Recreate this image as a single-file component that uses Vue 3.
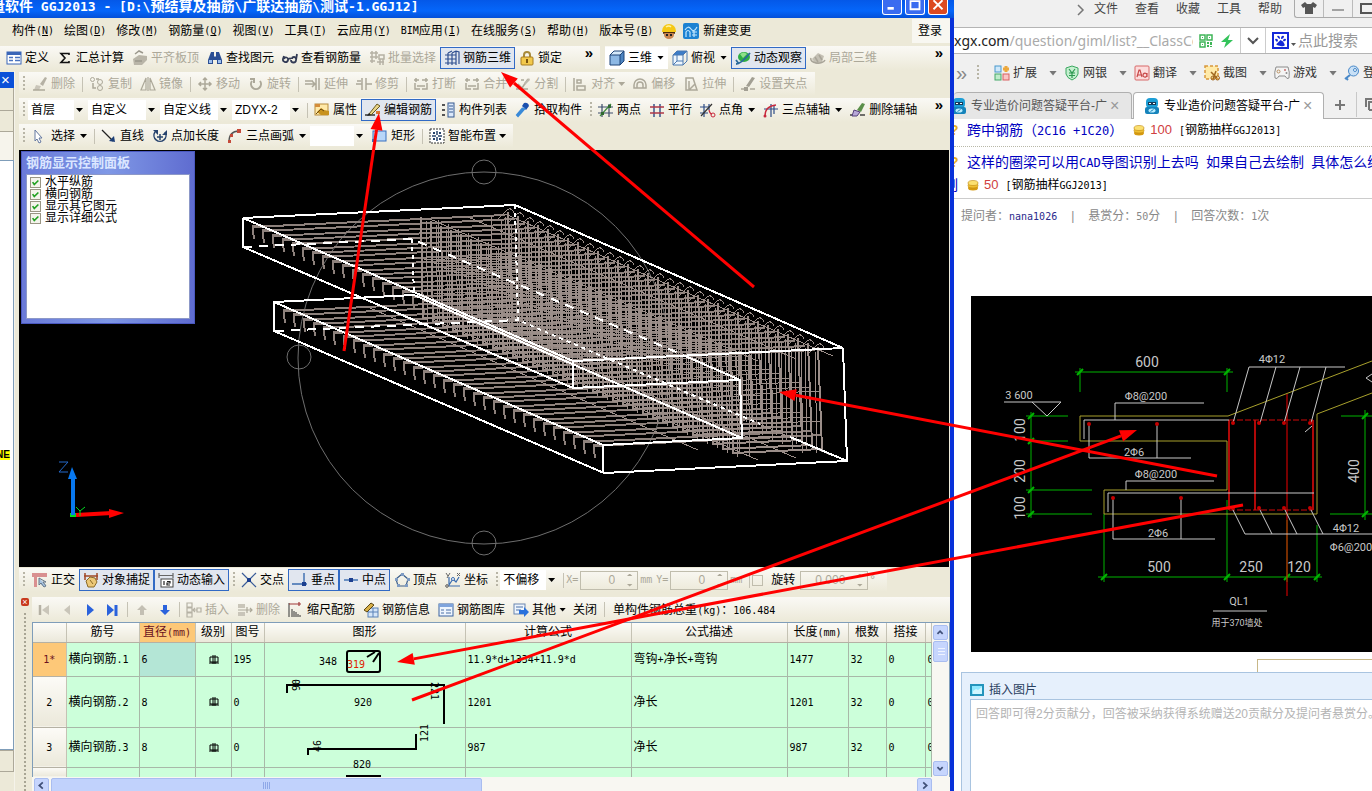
<template>
  <div class="screen">
    <section class="app">
      <header class="titlebar">
        <span class="title"><Txt s="量软件 GGJ2013 - [D:\预结算及抽筋\广联达抽筋\测试-1.GGJ12]" /></span>
        <span class="win-btns">
          <button class="wb" aria-label="最小化"><svg viewBox="0 0 20 15"><path d="M5 9h7" stroke="#fff" stroke-width="3" /></svg></button>
          <button class="wb" aria-label="最大化"><svg viewBox="0 0 20 15"><path d="M5 0v10h10V0M5 1h10" stroke="#fff" stroke-width="2" fill="none" /></svg></button>
          <button class="wb close" aria-label="关闭"><svg viewBox="0 0 20 15"><path d="M5 0l10 10M15 0L5 10" stroke="#fff" stroke-width="2" /></svg></button>
        </span>
      </header>

      <nav class="menubar">
        <button v-for="m in menus" :key="m[1]" class="menu"><Txt :s="m[0]" /><span class="lat">(<u>{{ m[1] }}</u>)</span></button>
        <svg class="ic helmet" viewBox="0 0 16 16" v-html="icons.helmet" />
        <button class="menu change"><svg class="ic" viewBox="0 0 16 16" v-html="icons.wave" />新建变更</button>
        <button class="login">登录</button>
      </nav>

      <div class="bar-row first">
        <div class="strip grow">
          <button v-for="b in bar1" :key="b.t" class="tb" :class="{ on: b.on }" :disabled="b.off">
            <svg class="ic" viewBox="0 0 16 16" v-html="icons[b.i]" />{{ b.t }}
          </button>
          <span class="more">»</span>
        </div>
        <div class="strip view">
          <button v-for="b in bar1b" :key="b.t" class="tb" :class="{ on: b.on, white: b.white }" :disabled="b.off">
            <svg class="ic" viewBox="0 0 16 16" v-html="icons[b.i]" />{{ b.t }}<i v-if="b.arrow" class="arr wide" />
          </button>
          <span class="more">»</span>
        </div>
      </div>

      <div class="body">
        <aside class="side">
          <div class="side-head">×</div>
          <div class="side-a"></div>
          <div class="side-b"></div>
          <div class="side-c"></div>
          <div class="side-tree"><mark>NE</mark></div>
          <div class="side-b"></div>
          <div class="side-d"></div>
        </aside>

        <main class="work">
          <div class="bar-row">
            <div class="strip">
              <i class="grip" />
              <template v-for="b in bar2" :key="b.t">
                <i v-if="b.sep" class="sep" />
                <button class="tb" disabled>
                  <svg class="ic" viewBox="0 0 16 16" v-html="icons[b.i]" />{{ b.t }}<i v-if="b.arrow" class="arr" />
                </button>
              </template>
            </div>
          </div>

          <div class="bar-row">
            <div class="strip grow">
              <i class="grip" />
              <label v-for="c in combos" :key="c" class="combo" :class="{ short: c === '首层' }">
                <select :aria-label="c"><option>{{ c }}</option></select><i class="arr" />
              </label>
              <i class="sep" />
              <button v-for="b in bar3" :key="b.t" class="tb" :class="{ on: b.on }">
                <svg class="ic" viewBox="0 0 16 16" v-html="icons[b.i]" />{{ b.t }}
              </button>
              <i class="grip late" />
              <button v-for="b in bar3b" :key="b.t" class="tb">
                <svg class="ic" viewBox="0 0 16 16" v-html="icons[b.i]" />{{ b.t }}<i v-if="b.arrow" class="arr wide" />
              </button>
              <span class="more">»</span>
            </div>
          </div>

          <div class="bar-row">
            <div class="strip">
              <i class="grip" />
              <template v-for="b in bar4" :key="b.t">
                <i v-if="b.sep" class="sep" />
                <label v-if="b.combo" class="combo blank"><select aria-label="画弧方式"><option></option></select><i class="arr" /></label>
                <button v-else class="tb">
                  <svg class="ic" viewBox="0 0 16 16" v-html="icons[b.i]" />{{ b.t }}<i v-if="b.arrow" class="arr" :class="{ wide: b.arrow > 1 }" />
                </button>
              </template>
            </div>
          </div>

          <div class="viewport">
            <svg class="scene" shape-rendering="crispEdges">
              <g transform="translate(-19 -150)" fill="none">
                <g stroke="#6e6e6e" shape-rendering="auto">
                  <circle cx="484" cy="358" r="186" />
                  <circle cx="484" cy="172" r="12" />
                  <circle cx="299" cy="357" r="12" />
                  <circle cx="484" cy="543" r="12" />
                </g>
                <path :d="bars" stroke="#8d817c" stroke-width="2" />
                <path :d="stirrups" stroke="#9b8e89" stroke-width="2" />
                <path :d="ties" stroke="#9b8e89" />
                <g stroke="#fff" stroke-width="2">
                  <path d="M243 218L515 205L843 348L573 361ZM243 218V247L573 388V361M573 388L740 380L742 438L603 445L274 302V331L604 473L847 461L843 348M603 445V473M274 302L414 295L742 438M740 380L683 355" />
                  <path stroke-dasharray="9 7" d="M243 247L412 239L683 355M275 331L518 320" />
                  <path stroke-dasharray="4 4" d="M412 239L414 295M515 205L518 320L760 424" />
                  <path d="M790 437L847 461" />
                </g>
                <g shape-rendering="auto">
                  <path d="M70 513h6v4h-6z" fill="#0d2" />
                  <path d="M73 515V474" stroke="#0878f0" stroke-width="4" />
                  <path d="M72 467l5 12h-9z" fill="#0878f0" />
                  <path d="M76 515L112 513" stroke="#f00" stroke-width="4" />
                  <path d="M124 513l-15 5v-9z" fill="#f00" />
                  <path d="M76 507l4 4l5-4M80 511v5" stroke="#0d2" />
                  <path d="M59 462h9l-9 10h9" stroke="#2468c8" />
                </g>
              </g>
            </svg>
            <div class="panel">
              <div class="panel-title">钢筋显示控制面板</div>
              <div class="panel-body">
                <label v-for="c in checks" :key="c"><input type="checkbox" checked /><i class="tick"><svg viewBox="0 0 11 11"><path d="M2 5l2 3l5-5" fill="none" stroke="#21a121" stroke-width="2" /></svg></i>{{ c }}</label>
              </div>
            </div>
          </div>

          <div class="bar-row snap">
            <div class="strip">
              <i class="grip" />
              <template v-for="b in snaps" :key="b.t">
                <i v-if="b.grip" class="grip late" />
                <button class="tb" :class="{ on: b.on }">
                  <svg class="ic" viewBox="0 0 16 16" v-html="icons[b.i]" />{{ b.t }}
                </button>
              </template>
              <i class="grip late" />
              <label class="combo short"><select aria-label="偏移"><option>不偏移</option></select><i class="arr" /></label>
              <i class="sep" />
              <label class="num"><span class="lat">X=</span><span class="spin"><input value="0" disabled /><i /></span><span class="lat">mm</span></label>
              <label class="num"><span class="lat">Y=</span><span class="spin"><input value="0" disabled /><i /></span><span class="lat">mm</span></label>
              <i class="sep" />
              <label class="rot"><input type="checkbox" />旋转</label>
              <span class="spin big"><input aria-label="旋转角度" value="0.000" disabled /><i /></span><span class="deg">°</span>
            </div>
          </div>

          <div class="dock">
            <div class="dock-edge"><button aria-label="关闭">×</button></div>
            <div class="dock-main">
              <div class="rowbar">
                <button v-for="n in navs" :key="n" class="nav" :aria-label="n"><svg class="ic" viewBox="0 0 16 16" v-html="icons[n]" /></button>
                <i class="sep" />
                <button v-for="n in moves" :key="n" class="nav" :aria-label="n"><svg class="ic" viewBox="0 0 16 16" v-html="icons[n]" /></button>
                <i class="sep" />
                <button v-for="b in edits" :key="b.t" class="tb" :disabled="b.off">
                  <svg class="ic" viewBox="0 0 16 16" v-html="icons[b.i]" />{{ b.t }}<i v-if="b.arrow" class="arr" />
                </button>
                <button class="tb">关闭</button>
                <i class="sep" />
                <span class="total"><Txt s="单构件钢筋总重(kg)：106.484" /></span>
              </div>
              <div class="gridbox">
                <div class="grid-clip">
                  <table>
                    <colgroup><col v-for="(w, i) in cols" :key="i" :style="{ width: w }" /></colgroup>
                    <thead>
                      <tr><th v-for="(h, i) in heads" :key="i" :class="{ hot: i === 2 }"><Txt :s="h" /></th></tr>
                    </thead>
                    <tbody>
                      <tr v-for="(r, i) in rows" :key="i" :class="'r' + i">
                        <th :class="{ hot: i === 0 }"><Txt :s="r.n" /></th>
                        <td><Txt :s="r.name" /></td>
                        <td class="dia" :class="{ sel: i === 0 }"><Txt :s="r.d" /></td>
                        <td class="mid"><svg v-if="r.d" class="grade" viewBox="0 0 10 10"><path d="M1 2h8v5H1zM4 0v9M6 0v9M0 8h10" fill="none" stroke="#000" /></svg></td>
                        <td><Txt :s="r.no" /></td>
                        <td class="shape"><svg v-html="r.svg" /></td>
                        <td><Txt :s="r.f" /></td>
                        <td><Txt :s="r.desc" /></td>
                        <td><Txt :s="r.len" /></td>
                        <td><Txt :s="r.cnt" /></td>
                        <td><Txt :s="r.lap" /></td>
                        <td><Txt :s="r.lap" /></td>
                      </tr>
                    </tbody>
                  </table>
                </div>
                <div class="vscroll">
                  <button aria-label="上">
                    <svg viewBox="0 0 15 15"><path d="M4 9l3-3l3 3" /></svg>
                  </button>
                  <div class="vthumb"></div>
                  <button class="down" aria-label="下">
                    <svg viewBox="0 0 15 15"><path d="M4 6l3 3l3-3" /></svg>
                  </button>
                </div>
              </div>
              <div class="hscroll">
                <button aria-label="左"><svg viewBox="0 0 15 15"><path d="M9 4L5 7.500l4 3.500" /></svg></button>
                <div class="hthumb"><i /></div>
                <button class="right" aria-label="右"><svg viewBox="0 0 15 15"><path d="M6 4l4 3.500l-4 3.500" /></svg></button>
              </div>
            </div>
          </div>
        </main>
      </div>
    </section>

    <section class="web">
      <nav class="web-menu">
        <svg class="chev" viewBox="0 0 8 12"><path d="M1 1l5 5l-5 5" fill="none" stroke="#777" stroke-width="1.500" /></svg>
        <button v-for="m in webMenus" :key="m">{{ m }}</button>
        <span class="web-win">
          <svg viewBox="0 0 28 17"><path d="M10 2l-4 3l2 3l2-1v7h8V7l2 1l2-3l-4-3l-2 2h-4z" fill="#555" /></svg>
          <svg viewBox="0 0 28 17"><path d="M8 10h12" stroke="#555" /></svg>
          <svg viewBox="0 0 28 17"><path d="M8 4h12v9H8z" fill="none" stroke="#555" stroke-width="2" /></svg>
        </span>
      </nav>
      <div class="address">
        <span class="url"><b>xgx.com</b>/question/giml/list?__ClassCode</span>
        <svg class="ic" viewBox="0 0 16 16" v-html="icons.qr" />
        <svg class="ic bolt" viewBox="0 0 16 16" v-html="icons.bolt" />
        <span class="drop"><svg viewBox="0 0 14 10"><path d="M2 2l5 5l5-5" fill="none" stroke="#555" stroke-width="2" /></svg></span>
        <svg class="paw" viewBox="0 0 17 17" v-html="icons.paw" /><i class="arr" />
        <input class="search" placeholder="点此搜索" aria-label="搜索" />
      </div>
      <div class="plugins">
        <span class="raquo">»</span><i class="grip" />
        <button v-for="p in plugins" :key="p[0]"><svg class="ic" viewBox="0 0 16 16" v-html="icons[p[1]]" />{{ p[0] }}<i class="arr" /></button>
      </div>
      <div class="tabs">
        <div class="tab old"><svg class="ic" viewBox="0 0 16 16" v-html="icons.bot" /><span>专业造价问题答疑平台-广</span><em>×</em></div>
        <div class="tab cur"><svg class="ic" viewBox="0 0 16 16" v-html="icons.bot" /><span>专业造价问题答疑平台-广</span><em>×</em></div>
        <button class="plus" aria-label="新标签"><svg viewBox="0 0 12 12"><path d="M6 1v10M1 6h10" stroke="#777" stroke-width="2" /></svg></button>
        <button class="tablist" aria-label="标签列表"><svg viewBox="0 0 18 14"><path d="M2 9V1h13M5 12V4h12v5M5 12h6" fill="none" stroke="#777" stroke-width="2" /><path d="M11 10l3 3l3-3" fill="none" stroke="#777" /></svg></button>
      </div>
      <div class="page">
        <div class="q one">
          <i class="qm">?</i><a href="#">跨中钢筋（<Txt s="2C16 +1C20" />）</a>
          <svg class="coin" viewBox="0 0 12 12" v-html="icons.coin" /><b>100</b><span><Txt s="[钢筋抽样GGJ2013]" /></span>
        </div>
        <div class="q two">
          <i class="qm">?</i><a href="#"><Txt s="这样的圈梁可以用CAD导图识别上去吗 如果自己去绘制 具体怎么绘" /></a>
        </div>
        <div class="q three">
          <a class="frag" href="#">制</a><svg class="coin" viewBox="0 0 12 12" v-html="icons.coin" /><b>50</b><span><Txt s="[钢筋抽样GGJ2013]" /></span>
        </div>
        <div class="meta">
          <span>提问者：<a href="#"><Txt s="nana1026" /></a></span><i>|</i><span><Txt s="悬赏分：50分" /></span><i>|</i><span><Txt s="回答次数：1次" /></span>
        </div>
        <div class="cad">
          <svg>
            <g transform="translate(-971 -296)" fill="none" font-family="Roboto, 'Noto Sans CJK SC', sans-serif">
              <g stroke="#00b400">
                <path d="M1075 372H1233M1080 368v24M1227 368v24M1031 412V518M1026 416h42M1031 441h37M1026 490h66M1026 514h66M1104 514v68M1227 500v82M1287 520v62M1317 525v57M1098 577h224M1365 410v110M1341 416h31M1330 514h42" />
                <path stroke-width="2" d="M1077 375l6-6M1224 375l6-6M1028 419l6-6M1028 444l6-6M1028 493l6-6M1028 517l6-6M1101 580l6-6M1224 580l6-6M1284 580l6-6M1314 580l6-6M1362 419l6-6M1362 517l6-6" />
              </g>
              <path stroke="#a8a02c" d="M1080 416H1228L1372 361M1080 416V441H1227V490H1104V514H1317V414L1372 393" />
              <path stroke="#b00808" stroke-width="2" d="M1229 420V510M1313 420V510M1255 420v90" />
              <path stroke="#d00808" d="M1229 420H1313M1229 510H1313" stroke-dasharray="6 2" />
              <path stroke="#e00" d="M1287 394V596" />
              <path stroke="#c8c8c8" d="M1084 439V420H1229M1115 420V403H1204M1089 424V458H1191M1157 424V458M1108 512V493H1314M1126 490V481H1214M1113 497V539H1215M1181 497V539M1004 402H1061L1047 416L1032 402M1233 423L1249 367H1345M1260 423L1276 367M1284 423L1300 367M1311 423L1326 367M1305 432l7-6M1232 508L1245 534H1372M1259 508L1272 534M1284 508L1297 534M1310 508L1323 534M1213 611h54M1372 374l-6 4l6 4" />
              <g fill="#c60000"><circle v-for="p in dots" :key="p.join()" :cx="p[0]" :cy="p[1]" r="2" /></g>
              <g fill="#c8c8c8">
                <text v-for="t in cadTexts" :key="t.join()" :x="t[0]" :y="t[1]" :font-size="t[3]" text-anchor="middle" :transform="t[4] ? `rotate(-90 ${t[0]} ${t[1]})` : null">{{ t[2] }}</text>
              </g>
            </g>
          </svg>
        </div>
        <div class="stub"></div>
        <div class="answer">
          <button class="insert"><svg viewBox="0 0 14 12"><path d="M0 0h14v12H0z" fill="#2494bc" /><path d="M2 2h10v8H2z" fill="#8fe8ff" /><path d="M3 7l3-2l2 1l4-3v7H3z" fill="#fff" opacity=".6" /></svg>插入图片</button>
          <textarea aria-label="回答" placeholder="回答即可得2分贡献分，回答被采纳获得系统赠送20贡献分及提问者悬赏分。"></textarea>
        </div>
      </div>
    </section>

    <svg class="marks">
      <g v-for="(a, i) in arrows" :key="i" fill="#f00">
        <path :d="a.line" stroke="#f00" stroke-width="3" />
        <path :d="a.head" />
      </g>
    </svg>
  </div>
</template>

<script setup>
import { h } from 'vue'

// latin runs are set half as wide as the chinese characters
const Txt = (props) => (props.s || '').split(/([\x20-\x7e]+)/).filter(Boolean)
  .map((p) => (/^[\x20-\x7e]/.test(p) ? h('span', { class: 'lat' }, p) : p))
Txt.props = ['s']

const menus = [['构件', 'N'], ['绘图', 'D'], ['修改', 'M'], ['钢筋量', 'Q'], ['视图', 'V'], ['工具', 'T'], ['云应用', 'Y'], ['BIM应用', 'I'], ['在线服务', 'S'], ['帮助', 'H'], ['版本号', 'B']]

const bar1 = [
  { t: '定义', i: 'define' }, { t: '汇总计算', i: 'sigma' }, { t: '平齐板顶', i: 'slab', off: true },
  { t: '查找图元', i: 'find' }, { t: '查看钢筋量', i: 'glasses' }, { t: '批量选择', i: 'batch', off: true },
  { t: '钢筋三维', i: 'rebar3d', on: true }, { t: '锁定', i: 'lock' }
]
const bar1b = [
  { t: '三维', i: 'cube', arrow: 1, white: true }, { t: '俯视', i: 'cubeTop', arrow: 1 },
  { t: '动态观察', i: 'orbit', on: true }, { t: '局部三维', i: 'part', off: true }
]
const bar2 = [
  { t: '删除', i: 'eraseG' }, { t: '复制', i: 'copy', sep: 1 }, { t: '镜像', i: 'mirror' },
  { t: '移动', i: 'move', sep: 1 }, { t: '旋转', i: 'rotate' }, { t: '延伸', i: 'extend', sep: 1 }, { t: '修剪', i: 'trim' },
  { t: '打断', i: 'break', sep: 1 }, { t: '合并', i: 'break' }, { t: '分割', i: 'split' },
  { t: '对齐', i: 'align', sep: 1, arrow: 1 }, { t: '偏移', i: 'offset' }, { t: '拉伸', i: 'stretch' },
  { t: '设置夹点', i: 'gripPt', sep: 1 }
]
const combos = ['首层', '自定义', '自定义线', 'ZDYX-2']
const bar3 = [
  { t: '属性', i: 'prop' }, { t: '编辑钢筋', i: 'edit', on: true }, { t: '构件列表', i: 'list' }, { t: '拾取构件', i: 'pick' }
]
const bar3b = [
  { t: '两点', i: 'axis2' }, { t: '平行', i: 'axisP' }, { t: '点角', i: 'axisA', arrow: 1 },
  { t: '三点辅轴', i: 'axis3', arrow: 1 }, { t: '删除辅轴', i: 'erase' }
]
const bar4 = [
  { t: '选择', i: 'cursor', arrow: 2 }, { t: '直线', i: 'line', sep: 1 }, { t: '点加长度', i: 'ptlen' },
  { t: '三点画弧', i: 'arc', arrow: 2 }, { t: 'combo', combo: 1 }, { t: '矩形', i: 'rect' },
  { t: '智能布置', i: 'smart', sep: 1, arrow: 1 }
]
const checks = ['水平纵筋', '横向钢筋', '显示其它图元', '显示详细公式']
const snaps = [
  { t: '正交', i: 'ortho' }, { t: '对象捕捉', i: 'snap', on: true }, { t: '动态输入', i: 'dyn', on: true },
  { t: '交点', i: 'cross', grip: 1 }, { t: '垂点', i: 'perp', on: true }, { t: '中点', i: 'midpt', on: true },
  { t: '顶点', i: 'penta' }, { t: '坐标', i: 'coord' }
]
const navs = ['firstRow', 'prevRow', 'nextRow', 'lastRow']
const moves = ['upRow', 'downRow']
const edits = [
  { t: '插入', i: 'ins', off: true }, { t: '删除', i: 'del', off: true }, { t: '缩尺配筋', i: 'scale' },
  { t: '钢筋信息', i: 'info' }, { t: '钢筋图库', i: 'lib' }, { t: '其他', i: 'other', arrow: 1 }
]

const cols = ['33px', '73px', '56px', '36px', '33px', '201px', '166px', '156px', '61px', '38px', '39px', 'auto']
const heads = ['', '筋号', '直径(mm)', '级别', '图号', '图形', '计算公式', '公式描述', '长度(mm)', '根数', '搭接', '']
const digits = 'font-family="DejaVu Sans Mono" font-size="10"'
const rows = [
  { n: '1*', name: '横向钢筋.1', d: '6', no: '195', f: '11.9*d+1334+11.9*d', desc: '弯钩+净长+弯钩', len: '1477', cnt: '32', lap: '0',
    svg: `<text x="54" y="22" ${digits}>348</text><rect x="82" y="8" width="33" height="21" rx="2" fill="none" stroke="#000" stroke-width="2"/><path d="M102 14l8-5M108 19l6-9" stroke="#000" stroke-width="2"/><text x="82" y="25" fill="#e02000" ${digits}>319</text>` },
  { n: '2', name: '横向钢筋.2', d: '8', no: '0', f: '1201', desc: '净长', len: '1201', cnt: '32', lap: '0',
    svg: `<path d="M22 16V8H179V47" fill="none" stroke="#000" stroke-width="2"/><text x="89" y="29" ${digits}>920</text><text transform="translate(35 14) rotate(-90)" ${digits}>90</text><text transform="translate(166 5) rotate(90)" ${digits}>221</text>` },
  { n: '3', name: '横向钢筋.3', d: '8', no: '0', f: '987', desc: '净长', len: '987', cnt: '32', lap: '0',
    svg: `<path d="M43 27V21H151V6" fill="none" stroke="#000" stroke-width="2"/><text x="88" y="40" ${digits}>820</text><text transform="translate(56 24) rotate(-90)" ${digits}>46</text><text transform="translate(163 14) rotate(-90)" ${digits}>121</text>` },
  { svg: '<path d="M82 9V8H115V9" fill="none" stroke="#000" stroke-width="2"/>' }
]

const webMenus = ['文件', '查看', '收藏', '工具', '帮助']
const plugins = [['扩展', 'ext'], ['网银', 'bank'], ['翻译', 'trans'], ['截图', 'shot'], ['游戏', 'game'], ['登录', 'key']]

// bars of both slabs and the stirrups of the beam, stepping along its axis
let bars = ''
let stirrups = ''
let ties = ''
for (let i = 0; i < 32; i++) {
  const at = (px, py) => `${Math.round(px + i * 10)} ${Math.round(py + i * 4.35)}`
  bars += `M${at(252, 227)}L${at(505, 215)}M${at(283, 311)}L${at(512, 300)}`
  bars += `M${at(260, 226)}h-7v4l1 9M${at(291, 310)}h-7v4l1 9`
  stirrups += `M${at(421, 217)}L${at(423, 318)}L${at(512, 314)}L${at(508, 212)}`
  ties += `M${at(426, 220)}L${at(428, 322)}M${at(505, 216)}L${at(507, 318)}M${at(438, 219)}L${at(440, 321)}M${at(491, 215)}L${at(493, 318)}`
  ties += `M${at(498, 219)}L${at(506, 211)}q5 -5 8 2M${at(424, 290)}l86 -4M${at(424, 260)}l86 -4`
}
for (const [px, py] of [[430, 219], [468, 217], [505, 214], [430, 318], [468, 316], [505, 314], [370, 308]]) {
  ties += `M${px} ${py}l328 142`
}

const dots = [[1089, 424], [1157, 424], [1113, 498], [1181, 498], [1233, 423], [1259, 423], [1284, 423], [1310, 423], [1233, 508], [1259, 508], [1284, 508], [1310, 508]]
const cadTexts = [
  [1147, 367, '600', 14], [1272, 363, '4Φ12', 11], [1019, 399, '3 600', 11], [1146, 400, 'Φ8@200', 11],
  [1134, 456, '2Φ6', 11], [1156, 478, 'Φ8@200', 11], [1158, 537, '2Φ6', 11], [1159, 572, '500', 14],
  [1251, 572, '250', 14], [1299, 572, '120', 14], [1346, 532, '4Φ12', 11], [1351, 551, 'Φ6@200', 11],
  [1239, 605, 'QL1', 11], [1237, 626, '用于370墙处', 9], [1025, 430, '100', 14, 1], [1025, 471, '200', 14, 1],
  [1025, 508, '100', 14, 1], [1359, 471, '400', 14, 1]
]

const arrows = [
  [754, 287, 501, 72], [344, 351, 379, 113], [1217, 476, 779, 392], [412, 700, 1137, 430], [1243, 505, 397, 662]
].map(([x1, y1, x2, y2]) => {
  const len = Math.hypot(x2 - x1, y2 - y1)
  const ux = (x2 - x1) / len
  const uy = (y2 - y1) / len
  const bx = x2 - ux * 17
  const by = y2 - uy * 17
  return {
    line: `M${x1} ${y1}L${bx} ${by}`,
    head: `M${x2} ${y2}L${bx - uy * 6} ${by + ux * 6}L${bx + uy * 6} ${by - ux * 6}Z`
  }
})

const g = (d, c = '#aca899', w = 1.5) => `<path d="${d}" fill="none" stroke="${c}" stroke-width="${w}"/>`
const f = (d, c) => `<path d="${d}" fill="${c}"/>`
const icons = {
  helmet: f('M1 8a7 7 0 0 1 14 0v1H1z', '#f5c815') + f('M3 9h10v3a5 4 0 0 1-10 0z', '#c98550') + f('M2 9h12v2l-2-1H4l-2 1z', '#4a2c12') + f('M5 11h2v2H5zM9 11h2v2H9z', '#222') + g('M5 4q3-2 5 0', '#fff3a0'),
  wave: '<rect width="16" height="16" rx="2" fill="#1c82d2"/>' + g('M2 7q3-5 6-1t6-2M3 14V9q2-3 4 0v5M9 9h5M9 12h5M11 8v6', '#bfe6ff', 1.2),
  define: '<rect x="1" y="2" width="14" height="12" fill="#fff" stroke="#3a66b8"/>' + f('M1 2h14v3H1z', '#3a66b8') + g('M3 7.500h4M3 10.500h4M9 7.500h5M9 10.500h5', '#4a74c0'),
  sigma: g('M12 5V3.500H4L8 8l-4 4.500h8V11', '#111', 1.6),
  slab: f('M1 9l6-4l8 1v4l-5 5H2z', '#b9b5a8') + g('M3 4l4-3l4 2M3 11h7', '#9b988c'),
  find: f('M4 2h3v4l1 1l1-1V2h3l3 8v4h-5v-4H6v4H1v-4z', '#2c4f94') + f('M2 10h3v3H2zM11 10h3v3h-3z', '#9ec0f0'),
  glasses: g('M2 6L1 9a2.500 2.500 0 0 0 5 1a2 2 0 0 0-4-1M7 9q1-1 2 0M9 10a2.500 2.500 0 0 0 5 0l1-6M14 9a2 2 0 0 0-4 0', '#333b55', 1.8),
  batch: g('M1 3h8M1 7h8M1 11h5M3 1v12M7 1v8M10 5h5v4h-5zM11 9v6M14 9v6M8 12h7', '#b5b1a4'),
  rebar3d: g('M1 5h11M1 9h11M1 13h11M4 3v12M8 3v12M12 1v14M4 3l4-2M8 3l4-2M12 1l3 1v12', '#2f4f90', 1.2),
  lock: g('M5 8V5a3 3 0 0 1 6 0v3', '#a88a3a', 2) + '<rect x="2" y="7" width="12" height="8" rx="1" fill="#f2c94c" stroke="#a87d1e"/>' + f('M7 9h2v4H7z', '#7a5510'),
  cube: f('M1 5l4-4h10l-4 4z', '#d5e9fa') + f('M1 5h10v10H1z', '#8db8e4') + f('M11 5l4-4v10l-4 4z', '#4d84c0') + g('M1 5l4-4h10v10l-4 4H1zM1 5h10v10M11 5l4-4', '#1f4478', 1),
  cubeTop: f('M1 5l4-4h10l-4 4z', '#3c7cc8') + f('M1 5h10v10H1z', '#eef6fd') + g('M1 5l4-4h10v10l-4 4H1zM1 5h10v10M11 5l4-4M5 5v6l-4 4M5 11h6', '#4a78b0', 1),
  orbit: '<ellipse cx="9" cy="7" rx="6" ry="5" fill="#2fae43"/>' + f('M5 4q4-3 7 0l-4 4z', '#8fe08a') + g('M1 14Q6 14 15 3M1 10l3 4', '#2a6a9a', 1.8),
  part: f('M2 9l6-6l6 3l-2 6l-6 2z', '#c3bfb3') + g('M1 8a7 4 0 0 0 14 2M5 7l3 5M9 5l3 5', '#a8a498'),
  eraseG: f('M8 8l5-7l2 1l-4 8z', '#b5b1a4') + f('M4 9l5 1l-2 4H2z', '#c9c5b9') + g('M1 14h12'),
  copy: '<circle cx="3.500" cy="3.500" r="2" fill="none" stroke="#aca899"/><circle cx="11" cy="6" r="2.500" fill="none" stroke="#aca899"/><circle cx="11" cy="12" r="2.500" fill="none" stroke="#aca899"/>' + g('M4 7v5h3M7 3h3'),
  mirror: g('M6 2v12H1zM10 2v12h5zM8 1v14', '#aca899', 1.2),
  move: g('M8 2v12M2 8h12M6 4l2-2l2 2M6 12l2 2l2-2M4 6L2 8l2 2M12 6l2 2l-2 2'),
  rotate: g('M4 5a5 5 0 1 0 8 0M2 3h4v4', '#aca899', 2),
  extend: g('M0 8h10M0 5h8M7 5l3 3l-3 3M11 2v12M14 2v12'),
  trim: g('M0 8h6M10 8h6M6 2v12M10 2v12M1 5h4'),
  break: g('M1 4h5M9 4h6M2 7v6h5M9 13h5V7M4 10h8M3 2v4M13 2v4'),
  split: g('M1 13h12M3 8l4 4M6 4h3M13 3l-6 9') + f('M9 7l5-5l1 2l-5 5z', '#bdb9ac'),
  align: g('M2 2v13M5 4h4v3H5zM5 10h8v4H5z'),
  offset: g('M2 12V9a6 6 0 0 1 12 0v3zM5 12V9a3 3 0 0 1 6 0v3'),
  stretch: g('M3 2h7l4 12H3zM6 5v9M6 14l6-6'),
  gripPt: g('M1 13h3M10 13h5') + f('M6 10l6-9l3 1l-6 9zM4 11h4v4H4z', '#a29f93'),
  prop: '<rect x="1" y="2" width="13" height="11" fill="#ffe9a8" stroke="#b78b3a"/>' + f('M1 2h5v3H1z', '#d48c3a') + f('M3 10l4-4l3 2l5 1v4H7z', '#c8921e') + g('M2 12l5-5l3 2', '#6b4a10', 1),
  edit: g('M0 13h10', '#333') + f('M4 12l8-10l3 2l-9 9z', '#e8d488') + g('M4 12l8-10l3 2l-9 9z', '#6a5a20', 1) + f('M2 14l2-3l2 2z', '#222') + f('M11 9h4v3h-4z', '#d87838'),
  list: g('M2 3h3M2 8h3M2 13h3', '#555', 2) + '<rect x="8" y="1" width="6" height="14" fill="#dce9fb" stroke="#35588f"/>' + g('M9 4h4M9 7h4M9 10h4', '#35588f', 1),
  pick: f('M9 1q4-1 5 3l-3 4l-4-4z', '#1a4fae') + g('M10 6l-7 8l-1-1l6-7', '#3a8ad8', 2),
  axis2: g('M4 2v13M11 2v13M0 5h15M0 11h15', '#3c4c6c', 1.2) + g('M2 14L13 2', '#3f8a3f', 1.2) + f('M10 3h3v3h-3zM3 10h3v3H3z', '#2f6a2f'),
  axisP: g('M5 2v13M11 2v13', '#2c4b86', 1.4) + g('M1 5h14M1 11h14', '#b03848', 1.4),
  axisA: g('M4 2v13M9 2v6M0 5h9M0 11h8', '#2c4b86', 1.2) + g('M1 14L12 2', '#333', 1.2) + '<circle cx="13" cy="13" r="2" fill="none" stroke="#c8283c"/>' + g('M9 8q1 4 3 4', '#c8283c', 1.2),
  axis3: g('M8 2v13M1 7h14M11 4v8', '#2c4b86', 1.2) + g('M2 14q0-10 11-11', '#c8283c', 1.4) + '<circle cx="2" cy="14" r="1.500" fill="#c8283c"/>',
  erase: g('M0 13h4M10 13h5', '#444') + f('M7 8l5-7l3 1l-4 8z', '#5b8f4a') + f('M4 8l6 2l-3 4H2z', '#b8a8d8') + g('M4 8l6 2l-3 4H2z', '#54407a', 1),
  cursor: f('M3 2l7 8H7l2 4l-2 1l-2-4l-2 2z', '#fff') + g('M3 2l7 8H7l2 4l-2 1l-2-4l-2 2z', '#6478a0', 1),
  line: g('M1 2l11 11', '#222', 1.3) + f('M14 14l-6-1l5-5z', '#1c3f78'),
  ptlen: g('M3 4a6 6 0 1 0 10 0M5 9h6M8 6v6', '#28446e', 1.5) + f('M1 2h5v5zM15 2v5h-5z', '#28446e'),
  arc: g('M2 14Q2 3 12 3', '#555', 1.4) + f('M10 1h4v4h-4zM1 12h3v3H1zM3 6h3v3H3z', '#c44a3a'),
  rect: '<rect x="1" y="3" width="13" height="10" fill="#b8d6f8" stroke="#3870c0"/>' + f('M0 11h3v3H0z', '#3870c0'),
  smart: '<rect x="1" y="1" width="14" height="14" fill="#fff" stroke="#333" stroke-dasharray="2 1"/>' + g('M3 8h4M9 8h4M8 3v4M8 9v4', '#28446e', 1.5) + f('M4 4h2v2H4zM10 4h2v2h-2zM4 10h2v2H4zM10 10h2v2h-2z', '#28446e'),
  ortho: f('M0 1h15v4H5v10H2V5H0z', '#d99090') + f('M7 6l7 7l-2 2l-5-4z', '#a8c4e0') + g('M7 6v7l2-2l3 4l2-1l-3-4h3z', '#678', 1),
  snap: g('M2 1v7M14 1v7M1 4h14', '#a04828', 1.5) + f('M3 9l4-4l5 1l2 4l-3 5H5z', '#ecc878') + g('M3 9l4-4l5 1l2 4l-3 5H5zM7 8l3 4', '#8a6a28', 1),
  dyn: g('M1 1v5M15 1v5M1 3.500h14', '#666', 1.2) + '<rect x="3" y="7" width="12" height="8" fill="#fff" stroke="#444"/>' + g('M6 9v4M9 9.500h3v1.500H9v2h3', '#222', 1.2),
  cross: g('M1 1l14 14M15 1L1 15', '#3a5c98', 1.2) + f('M6 6h4v4H6z', '#1c3f90'),
  perp: g('M0 12h15M12 1v11', '#3a6cb0', 1.4) + f('M10 10h4v4h-4z', '#1c3f90'),
  midpt: g('M1 8h14', '#3a6cb0', 1.4) + f('M6 6h4v4H6z', '#1c3f90'),
  penta: g('M8 2l6 5l-2 7H4L2 7z', '#3a5c88', 1.2) + f('M7 1h3v3H7zM1 6h3v3H1zM13 6h3v3h-3zM3 12h3v3H3zM11 12h3v3h-3z', '#7f9cc4'),
  coord: g('M4 5v9h11M4 13l4-6l3 3l3-5', '#3a6cb0', 1.2) + '<circle cx="8" cy="7" r="1.500" fill="#fff" stroke="#3a6cb0"/><circle cx="2" cy="14" r="1.300" fill="none" stroke="#555"/>' + g('M1 1l2 3M5 1L2 6M12 1l3 3M15 1l-3 3', '#666', 1),
  firstRow: g('M4 3v10', '#b5b1a4', 2.5) + f('M13 3v10L6 8z', '#c9c5b9'),
  prevRow: f('M11 3v10L5 8z', '#c9c5b9'),
  nextRow: f('M5 2v12l7-6z', '#2a62dc'),
  lastRow: f('M2 2v12l7-6z', '#2a62dc') + g('M11 3v11', '#2a62dc', 3),
  upRow: f('M8 3l5 5h-3v5H6V8H3z', '#c3bfb3'),
  downRow: f('M8 13L3 8h3V3h4v5h3z', '#2a62dc'),
  ins: g('M1 1h5v4H1zM1 6h5v4H1zM1 11h5v4H1zM7 8h4M11 6h4v4h-4zM9 6L7 8l2 2', '#b5b1a4', 1.2),
  del: f('M1 2h7v4H1zM1 10h7v4H1z', '#c9c5b9') + g('M1 8h14M10 5v6M13 6l2 2l-2 2', '#aca899', 1.2),
  scale: g('M1 1v14M4 7v8M6 9v6M8 10v5M10 12v3M12 13v2', '#333', 1) + g('M1 2h12M11 0v4', '#a03838', 1.2),
  info: '<rect x="5" y="6" width="10" height="9" fill="#d6e6f8" stroke="#5a82b8"/>' + g('M10 6v9M5 10h10', '#5a82b8', 1) + f('M1 8l7-7l3 2l-7 7z', '#d8b048') + g('M1 8l7-7l3 2l-7 7z', '#5a4614', 1),
  lib: '<rect x="1" y="2" width="14" height="12" fill="#eef5fd" stroke="#3a62a0"/>' + f('M1 2h14v3H1z', '#7fa4dc') + g('M3 8h3M8 8h5M3 11h3M8 11h5', '#4a70a8', 1.2),
  other: '<rect x="1" y="2" width="11" height="10" fill="#eef5fd" stroke="#6a86b0"/>' + g('M3 5h7M3 8h5', '#4a70a8', 1) + f('M6 8h5V5l5 5l-5 5v-3H6z', '#2a72dc'),
  qr: g('M2 2h5v5H2zM9 2h5v5H9zM2 9h5v5H2z', '#3fb558', 1.5) + f('M4 4h1v1H4zM11 4h1v1h-1zM4 11h1v1H4zM9 9h2v2H9zM12 9h2v3h-2zM9 12h2v2H9zM12 13h2v1h-2z', '#3fb558'),
  bolt: f('M11 1L2 9h5l-2 6l9-8H9z', '#33c35a'),
  paw: '<rect x="1" y="1" width="15" height="15" fill="#fff" stroke="#1428d8" stroke-width="2"/>' + f('M8.500 8q3 1 4 4t-4 2t-4-2t4-4zM3 7q3-1 3 2q-2 2-3-2zM5 4q3-1 3 3q-2 0-3-3zM9 7q0-4 3-3q0 3-3 3zM11 9q0-3 3-2q0 3-3 2z', '#1428d8'),
  ext: '<rect x="1" y="1" width="6" height="6" fill="#cfe8fa" stroke="#4898cc"/><rect x="1" y="9" width="6" height="6" fill="#bfeccb" stroke="#44a868"/><rect x="9" y="9" width="6" height="6" fill="#f9c4c4" stroke="#d86060"/>' + g('M12 1v6M9 4h6', '#eca83c', 3),
  bank: '<path d="M8 1l6 2v6q-1 4-6 6q-5-2-6-6V3z" fill="#c5efd0" stroke="#3ca860"/>' + g('M5 4l3 4l3-4M8 8v5M5 8h6M5 10.500h6', '#2c9850', 1.2),
  trans: '<rect x="1" y="1" width="14" height="14" rx="1" fill="#fcdcdc" stroke="#d86868"/>' + g('M3 12l2-7h1l2 7M4 10h3M13 8v4M13 10a2 2 0 1 0-.1.800', '#c84848', 1.2),
  shot: '<rect x="1" y="1" width="13" height="13" fill="#ffeaa8" stroke="#d8983c" stroke-width="1.500" stroke-dasharray="3 2"/>' + g('M7 7l6 6M12 6l-3 8', '#a06820', 1.5) + '<circle cx="9" cy="13" r="2" fill="none" stroke="#a06820"/><circle cx="13.500" cy="13" r="2" fill="none" stroke="#a06820"/>',
  game: '<path d="M2 2h12q2 5 1 11q-2 2-4-2H5q-2 4-4 2Q0 7 2 2z" fill="#f4f4f4" stroke="#8c8c8c"/><circle cx="4.500" cy="6.500" r="1.500" fill="none" stroke="#b89060"/><circle cx="11" cy="5" r="1" fill="#c87070"/><circle cx="12.500" cy="8" r="1" fill="#8c8c8c"/>',
  key: '<circle cx="9.500" cy="6" r="5" fill="#c8e0f6" stroke="#4888c8"/><circle cx="11" cy="5" r="1.500" fill="#fff" stroke="#4888c8"/>' + g('M6 10l-5 4M2 13l2 2', '#4888c8', 2),
  bot: '<rect x="2" y="0" width="12" height="10" rx="4" fill="#1d9ed6"/><rect x="1" y="9" width="14" height="7" rx="2" fill="#1583bb"/>' + f('M4 4h8v3H4z', '#173a58') + f('M5 5h2v1H5zM9 5h2v1H9z', '#fff') + '<ellipse cx="8" cy="12.500" rx="3.500" ry="2" fill="#b8ecff"/>' + g('M6.500 13.500l3-2', '#1583bb', 1),
  coin: '<ellipse cx="6" cy="9" rx="5" ry="2.500" fill="#d69a10"/><ellipse cx="6" cy="6.500" rx="5" ry="2.500" fill="#f0c030" stroke="#c08810" stroke-width=".6"/><ellipse cx="6" cy="4" rx="5" ry="2.500" fill="#fbe070" stroke="#c08810" stroke-width=".6"/>'
}
</script>

<style>
html, body { margin: 0; background: #fff; }
.lat { font: 10px/1 "DejaVu Sans Mono", monospace; }
.title .lat { font: bold 13px/1 "DejaVu Sans Mono", monospace; }
.q a .lat { font-size: 12px; }
</style>

<style scoped>
.screen {
  position: relative; display: flex; height: 100vh; overflow: hidden; color: #000;
  font: 12px/14px "Liberation Sans", "Noto Sans CJK SC", sans-serif;
}
.screen * { box-sizing: border-box; }
button, input, select, textarea { font: inherit; color: inherit; margin: 0; padding: 0; border: 0; background: none; border-radius: 0; }
button { white-space: nowrap; display: flex; align-items: center; }
a { text-decoration: none; color: #0000c0; }
.marks { position: absolute; inset: 0; width: 100%; height: 100%; pointer-events: none; }
.ic { width: 16px; height: 16px; flex: none; display: block; }

.app { flex: 950 1 0; min-width: 0; display: flex; flex-direction: column; background: #ece9d8; border-right: 4px solid #0831d9; }
.titlebar { height: 18px; flex: none; display: flex; justify-content: space-between; background: linear-gradient(#0458e8, #0566fa 60%, #0450d8); margin-right: -4px; padding-right: 6px; }
.title { color: #fff; font-weight: bold; font-size: 14px; line-height: 10px; white-space: nowrap; margin-left: -9px; }
.win-btns { display: flex; gap: 3px; }
.wb { width: 20px; height: 15px; border: 1px solid #fff; border-top: 0; border-radius: 0 0 3px 3px; background: #3a6cf0; }
.wb.close { background: #dc4a20; }
.wb svg { width: 18px; height: 14px; }

.menubar { height: 26px; flex: none; display: flex; align-items: center; padding-left: 12px; gap: 10px; }
.helmet { margin-left: -2px; }
.change { gap: 4px; margin-left: -4px; }
.login { margin-left: auto; height: 24px; padding: 0 8px 0 6px; background: #f8f7f1; }

.bar-row { height: 26px; flex: none; display: flex; align-items: center; }
.bar-row.first { height: 27px; gap: 5px; }
.strip { height: 24px; display: flex; align-items: center; background: linear-gradient(#faf9f5, #ece9d8); padding-right: 4px; min-width: 0; }
.strip.grow { flex: 1; }
.first .strip.grow { padding-left: 2px; }
.strip.view { flex: 0 0 345px; }
.tb { height: 22px; padding: 0 3px; gap: 3px; border: 1px solid transparent; flex: none; }
.tb.on { border-color: #316ac5; background: #e1e6ef; }
.tb.white { background: #fff; }
.tb:disabled { color: #aca899; }
.more { margin-left: auto; font-size: 15px; font-weight: bold; align-self: flex-start; padding-right: 3px; }
.arr { flex: none; width: 7px; height: 4px; background: currentColor; clip-path: polygon(0 0, 100% 0, 50% 100%); margin-right: -1px; }
.arr.wide { margin: 0 0 0 2px; }
.grip { flex: none; width: 2px; height: 16px; margin: 0 3px 0 4px; background: repeating-linear-gradient(#b8b5a6 0 2px, transparent 2px 4px); }
.grip.late { margin: 0 2px 0 4px; }
.sep { flex: none; width: 1px; height: 15px; margin: 0 2px 0 3px; background: #c5c2b4; }
.combo { position: relative; flex: none; width: 70px; height: 20px; margin-right: 2px; display: flex; align-items: center; background: linear-gradient(90deg, #fff 58px, transparent 58px); }
.combo.short { width: 58px; background: linear-gradient(90deg, #fff 46px, transparent 46px); }
.combo.blank { width: 56px; background: linear-gradient(90deg, #fff 44px, transparent 44px); }
.combo select { appearance: none; width: 100%; height: 18px; padding-left: 3px; }
.combo .arr { position: absolute; right: 4px; }

.body { flex: 1; min-height: 0; display: flex; gap: 4px; }
.side { width: 15px; flex: none; display: flex; flex-direction: column; border-right: 1px solid #f5f3ea; }
.side-head { height: 16px; margin-top: 1px; background: #0a50d8; color: #fff; font-size: 15px; line-height: 15px; padding-left: 1px; }
.side-a { height: 22px; border-right: 1px solid #aca899; }
.side-b { height: 22px; border: solid #aca899; border-width: 1px 1px 1px 0; }
.side-c { height: 28px; border-right: 1px solid #aca899; background: #f6f4ec; }
.side-tree { flex: 1; border: 1px solid #7f9db9; border-left: 0; background: #fff; display: flex; align-items: center; }
.side-tree mark { background: #ff0; font: bold 10px/10px "Liberation Sans", sans-serif; margin-left: -4px; }
.side-d { height: 19px; }

.work { flex: 1; min-width: 0; display: flex; flex-direction: column; }
.viewport { flex: 1; min-height: 0; position: relative; background: #000; margin: 1px 1px 0 0; }
.scene { position: absolute; width: 100%; height: 100%; }
.panel { position: absolute; left: 2px; top: 1px; width: 174px; height: 173px; background: linear-gradient(90deg, #6a7ad8, #7f98e6 50%, #5f6cd0); border: 1px solid #4a58c0; padding: 0 4px 4px; display: flex; flex-direction: column; }
.panel-title { color: #dbe6ff; font-weight: bold; font-size: 13px; line-height: 22px; }
.panel-body { flex: 1; background: #fff; border: 1px solid #8c98c8; padding: 1px 3px; }
.panel-body label { display: flex; align-items: center; height: 12px; gap: 4px; white-space: nowrap; }
.panel-body input { position: absolute; opacity: 0; }
.tick { width: 11px; height: 11px; flex: none; border: 1px solid #9a9684; background: #f4f4ec; }
.tick svg { display: block; width: 9px; height: 9px; }

.snap .strip { padding-right: 12px; }
.num { display: flex; align-items: center; gap: 2px; color: #aca899; margin-right: 4px; }
.spin { display: flex; align-items: center; justify-content: flex-end; width: 58px; height: 19px; border: 1px solid #c0bdad; color: #aca899; }
.spin input { flex: 1; min-width: 0; text-align: right; padding-right: 10px; }
.spin i { width: 9px; height: 13px; margin-right: 3px; background: currentColor; clip-path: polygon(50% 0, 80% 20%, 20% 20%, 50% 0, 50% 100%, 20% 80%, 80% 80%, 50% 100%); }
.spin.big { width: 68px; margin-left: 5px; }
.deg { color: #aca899; margin-left: 2px; }
.rot { display: flex; align-items: center; gap: 8px; }
.rot input { appearance: none; width: 11px; height: 11px; border: 1px solid #c0bdad; }

.dock { flex: none; display: flex; padding-top: 4px; }
.dock-edge { width: 13px; flex: none; padding-left: 2px; background: repeating-linear-gradient(transparent 0 2px, #ece9d8 2px 4px), linear-gradient(90deg, transparent 5px, #a8a594 5px 7px, transparent 7px) 0 16px no-repeat; }
.dock-edge button { width: 8px; height: 8px; margin-top: 1px; background: #c8381c; color: #fff; font-size: 9px; line-height: 8px; justify-content: center; border-radius: 2px; }
.dock-main { flex: 1; min-width: 0; }
.rowbar { height: 25px; display: flex; align-items: center; background: linear-gradient(#faf9f5, #ece9d8); }
.nav { width: 23px; justify-content: center; }
.total { margin-left: 6px; white-space: nowrap; }
.gridbox { display: flex; height: 155px; border: 1px solid #7f9db9; border-bottom: 0; background: #fff; }
.grid-clip { flex: 1; min-width: 0; overflow: hidden; }
table { width: 100%; border-collapse: collapse; table-layout: fixed; }
th { height: 19px; padding: 0; font-weight: normal; background: linear-gradient(#fcfbf7, #ebe8da); border-right: 1px solid #c5c2b4; border-bottom: 1px solid #b5b1a4; white-space: nowrap; }
th.hot { background: #fdc878; color: #6a1020; }
td { padding: 0 0 0 2px; background: #ccffda; border-right: 1px solid #a8b8a8; border-bottom: 1px solid #a8b8a8; white-space: nowrap; overflow: hidden; }
.r0 td, .r0 th { height: 34px; }
.r1 td, .r1 th { height: 51px; }
.r2 td, .r2 th { height: 40px; }
.r3 td, .r3 th { height: 10px; border-bottom: 0; }
.dia { border-left: 1px solid #000; }
.dia.sel { background: #b4e6d6; }
.mid { text-align: center; }
.grade { width: 10px; height: 10px; vertical-align: middle; }
.shape { padding: 0; overflow: visible; }
.shape svg { display: block; width: 200px; height: 50px; overflow: visible; position: relative; }
.r0 .shape svg { height: 33px; }
.r2 .shape svg { height: 39px; }
.r3 .shape svg { height: 9px; }
.vscroll { width: 17px; flex: none; display: flex; flex-direction: column; background: #f8f7f2; padding: 2px 1px 1px; }
.vscroll button, .hscroll button { width: 15px; height: 15px; flex: none; border: 1px solid #a9bdf0; border-radius: 2px; background: #c6d5fd; }
.vscroll svg, .hscroll svg { width: 13px; height: 13px; fill: none; stroke: #405078; stroke-width: 2; }
.vthumb { height: 21px; margin-top: 1px; border: 1px solid #a9bdf0; border-radius: 2px; background: repeating-linear-gradient(#eef3ff 0 1px, transparent 1px 3px) 4px 6px / 7px 8px no-repeat, #c6d5fd; }
.down { margin-top: auto; }
.hscroll { height: 14px; display: flex; align-items: flex-start; background: #f8f7f2; padding: 1px 18px 0 2px; }
.hthumb { flex: 0 0 431px; height: 15px; margin-left: 2px; background: #c1d2fc; border: 1px solid #a9bdf0; border-radius: 2px; display: flex; justify-content: center; align-items: center; }
.hthumb i { width: 8px; height: 7px; background: repeating-linear-gradient(90deg, #8fa8e8 0 1px, transparent 1px 2px); }
.right { margin-left: auto; }

.web { flex: 418 1 0; min-width: 0; display: flex; flex-direction: column; background: #f0f0f0; overflow: hidden; }
.web > * { flex: none; }
.web-menu { height: 27px; display: flex; justify-content: flex-end; align-items: flex-start; gap: 17px; color: #444; }
.web-menu button { padding-top: 2px; }
.chev { width: 8px; height: 12px; margin: 4px -8px 0 0; }
.web-win { display: flex; flex: none; width: 78px; overflow: hidden; height: 18px; border: solid #aaa; border-width: 0 0 1px 1px; border-radius: 0 0 0 3px; margin-left: -5px; }
.web-win svg { flex: none; width: 29px; height: 17px; border-right: 1px solid #bbb; }
.address { height: 27px; display: flex; align-items: center; background: #fff; border: solid #b4b4b4; border-width: 1px 0; }
.url { width: 239px; overflow: hidden; white-space: nowrap; color: #aaa; font: 14px/24px "Noto Sans", sans-serif; margin-right: 5px; }
.url b { font-weight: normal; color: #222; }
.bolt { margin: 0 5px; }
.drop { height: 100%; width: 26px; display: flex; align-items: center; justify-content: center; border: solid #ccc; border-width: 0 1px; margin-right: 6px; }
.drop svg { width: 14px; height: 10px; }
.paw { width: 17px; height: 17px; flex: none; }
.address .arr { width: 5px; height: 3px; color: #555; margin: 8px 2px 0; }
.search { flex: 1; min-width: 0; font-size: 15px; outline: 0; }
.search::placeholder { color: #999; }
.plugins { height: 38px; display: flex; align-items: center; color: #333; }
.plugins button { flex: none; width: 70px; gap: 3px; }
.plugins .arr { width: 8px; height: 5px; margin-left: 9px; color: #777; }
.plugins .grip { margin: 0 15px 0 10px; }
.raquo { font-size: 20px; color: #888; padding-left: 2px; width: 13px; }
.tabs { height: 27px; display: flex; border-bottom: 1px solid #b0b0b0; }
.tab { height: 27px; display: flex; align-items: center; border: 1px solid #b0b0b0; border-bottom: 0; border-radius: 4px 4px 0 0; white-space: nowrap; flex: none; }
.tab span { width: 136px; overflow: hidden; margin-left: 4px; }
.tab em { font-style: normal; font-size: 16px; color: #999; margin-left: 3px; }
.old { width: 178px; color: #555; background: #e6e6e6; border-left: 0; padding-left: 1px; }
.old .ic { margin-left: -4px; }
.cur { width: 191px; margin-left: 1px; background: #fff; padding-left: 10px; }
.plus { padding: 0 10px; border-right: 1px solid #c8c8c8; margin-bottom: 1px; }
.plus svg { width: 12px; height: 12px; }
.tablist { padding-left: 7px; flex: none; }
.tablist svg { width: 18px; height: 14px; flex: none; }

.page { flex: 1; min-height: 0; background: #fff; display: flex; flex-direction: column; white-space: nowrap; }
.page > * { flex: none; }
.q { display: flex; align-items: center; overflow: hidden; }
.q a { font-size: 14px; }
.q b { font-weight: normal; font-size: 13px; color: #d04040; margin-right: 7px; }
.qm { width: 13px; flex: none; margin-left: -4px; margin-right: 4px; color: #e8b020; font: bold 14px/14px "Liberation Sans", sans-serif; overflow: hidden; }
.coin { width: 12px; height: 12px; flex: none; margin-right: 5px; }
.one { height: 28px; border-bottom: 1px dotted #b8b8a8; padding-bottom: 6px; }
.one .coin { margin-left: 10px; }
.two { height: 30px; }
.three { height: 22px; border-bottom: 1px solid #ccc; padding-bottom: 6px; }
.three > :first-child { width: 23px; margin-left: -10px; flex: none; }
.meta { height: 34px; display: flex; align-items: center; padding-left: 7px; color: #888; }
.meta i { font-style: normal; width: 31px; text-align: center; }
.meta a { color: #2a2a8c; }
.cad { height: 356px; margin: 63px 0 0 17px; background: #000; }
.cad svg { display: block; width: 100%; height: 100%; }
.stub { height: 13px; margin: 7px 0 0 303px; border: solid #c8b888; border-width: 1px 0 0 1px; }
.page > .answer { flex: 1; min-height: 0; display: flex; flex-direction: column; margin-left: 7px; padding-left: 8px; border: solid #a9c4e0; border-width: 1px 0 0 1px; background: #e6f0fc; }
.insert { height: 26px; padding-top: 7px; gap: 5px; color: #2a4060; }
.insert svg { width: 14px; height: 12px; }
.answer textarea { flex: 1; width: 100%; resize: none; border: solid #a9c4e0; border-width: 1px 0 0 1px; background: #fff; padding: 7px 0 0 5px; outline: 0; white-space: nowrap; overflow: hidden; }
.answer textarea::placeholder { color: #b4b4b4; }
</style>
